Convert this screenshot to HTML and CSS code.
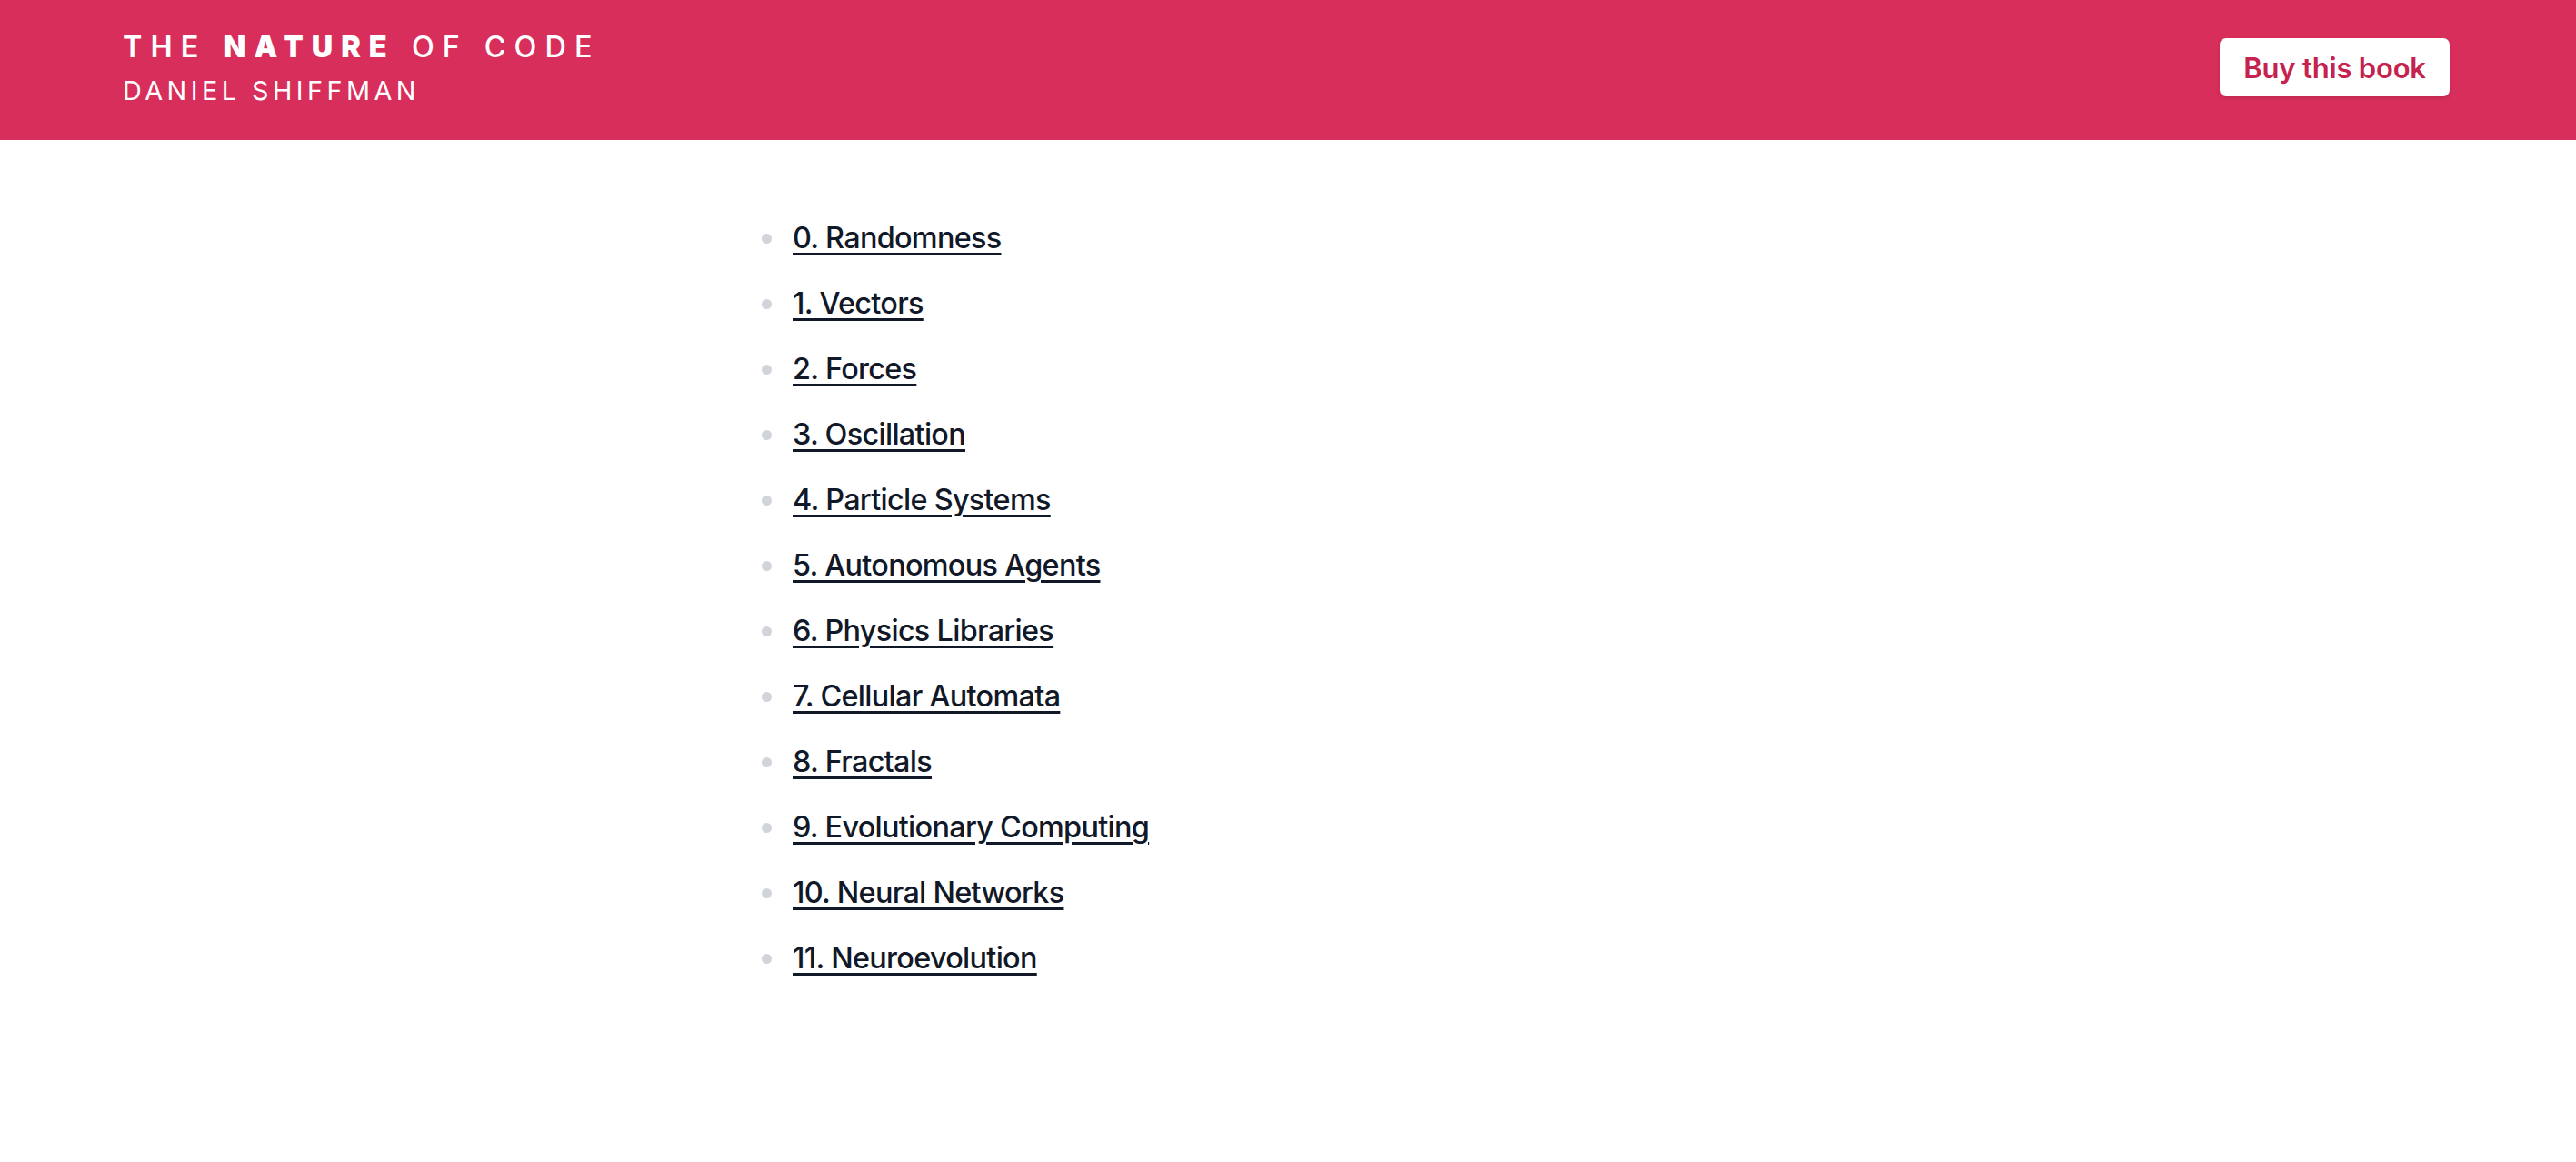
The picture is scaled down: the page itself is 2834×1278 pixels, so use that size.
FILE: index.html
```html
<!DOCTYPE html>
<html lang="en">
<head>
<meta charset="utf-8">
<title>The Nature of Code</title>
<link rel="stylesheet" href="styles.css">
</head>
<body>
<header class="site-header">
  <div class="brand">
    <div class="brand-title"><span class="w-the">THE</span> <span class="w-nature">NATURE</span> <span class="w-of">OF CODE</span></div>
    <div class="brand-author">DANIEL SHIFFMAN</div>
  </div>
  <a class="buy-btn" href="#">Buy this book</a>
</header>
<main class="content">
  <ul class="toc">
    <li><a href="#">0. Randomness</a></li>
    <li><a href="#">1. Vectors</a></li>
    <li><a href="#">2. Forces</a></li>
    <li><a href="#">3. Oscillation</a></li>
    <li><a href="#">4. Particle Systems</a></li>
    <li><a href="#">5. Autonomous Agents</a></li>
    <li><a href="#">6. Physics Libraries</a></li>
    <li><a href="#">7. Cellular Automata</a></li>
    <li><a href="#">8. Fractals</a></li>
    <li><a href="#">9. Evolutionary Computing</a></li>
    <li><a href="#">10. Neural Networks</a></li>
    <li><a href="#">11. Neuroevolution</a></li>
  </ul>
</main>
</body>
</html>
```
FILE: styles.css
```css
* { box-sizing: border-box; }
html, body { margin: 0; padding: 0; }
body {
  font-family: Inter, "Noto Sans", "Liberation Sans", sans-serif;
  background: #ffffff;
  color: #111827;
}
.site-header {
  background: #d82e5c;
  height: 154px;
  padding: 32px 139px 0 135px;
  display: flex;
  justify-content: space-between;
  align-items: flex-start;
}
.brand { display: flex; flex-direction: column; gap: 8px; color: #ffffff; }
.brand-title {
  font-size: 32.4px;
  line-height: 40px;
  letter-spacing: 0.28em;
  white-space: nowrap;
}
.w-the { font-weight: 600; }
.w-nature { font-weight: 900; }
.w-of { font-weight: 500; }
.brand-author {
  font-size: 28.8px;
  line-height: 40px;
  letter-spacing: 0.155em;
  font-weight: 400;
}
.buy-btn {
  margin-top: 10px;
  display: flex;
  align-items: center;
  justify-content: center;
  width: 253px;
  height: 64px;
  background: #ffffff;
  color: #c5224e;
  border-radius: 7px;
  font-size: 31px;
  font-weight: 600;
  letter-spacing: -0.2px;
  text-decoration: none;
  box-shadow: 0 2px 4px rgba(0,0,0,0.12);
}
.content {
  width: 1160px;
  margin: 72px auto 0;
}
.toc {
  list-style: none;
  margin: 0;
  padding: 0 0 0 35px;
}
.toc li {
  position: relative;
  font-size: 32.4px;
  line-height: 72px;
}
.toc li::before {
  content: "";
  position: absolute;
  left: -34px;
  top: 31px;
  width: 11px;
  height: 11px;
  border-radius: 50%;
  background: #d1d5db;
}
.toc a {
  color: #111827;
  font-weight: 500;
  letter-spacing: -0.7px;
  text-decoration: underline;
  text-decoration-thickness: 3px;
  text-underline-offset: 5px;
}
```
